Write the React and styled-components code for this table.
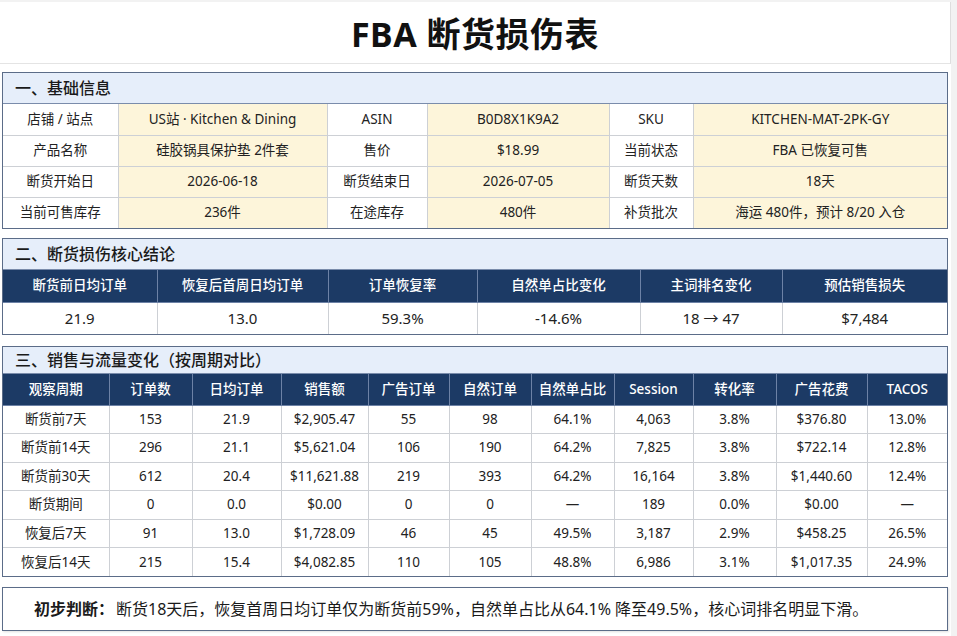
import styled, { createGlobalStyle } from "styled-components";

const GlobalStyle = createGlobalStyle`
  body {
    margin: 0;
    background: #f2f2f2;
    font-family: "Noto Sans", "Noto Sans CJK SC", sans-serif;
    color: #222;
  }
`;

const Sheet = styled.div`
  width: 951px;
  margin-top: 2px;
  background: #fff;
  padding-bottom: 6px;
`;

const TitleBar = styled.header`
  height: 61px;
  display: flex;
  align-items: center;
  justify-content: center;
  border-right: 1px solid #dedede;
  border-bottom: 1px solid #e4e4e4;
  font-size: 34px;
  font-weight: 700;
  color: #111;
  letter-spacing: 0.5px;
`;

const Content = styled.main`
  display: flex;
  flex-direction: column;
  padding: 0 3px 0 2px;
`;

const Section = styled.section`
  margin-top: ${(p) => p.$top}px;
  border: 1px solid #5b6c88;
`;

const Band = styled.div`
  height: ${(p) => p.$h}px;
  box-sizing: border-box;
  display: flex;
  align-items: center;
  padding-left: 12px;
  background: #e6eefa;
  border-bottom: 1px solid #7a8cab;
  font-size: 16px;
  font-weight: 500;
  line-height: 1;
  color: #1a1a1a;
`;

const Table = styled.table`
  width: 100%;
  border-collapse: collapse;
  border-style: hidden;
  table-layout: fixed;
  line-height: 1.1;
`;

const Th = styled.th`
  height: ${(p) => p.$h}px;
  box-sizing: border-box;
  padding: 0;
  background: #1c3a65;
  color: #fff;
  font-size: 13.5px;
  font-weight: 500;
  text-align: center;
  border: 1px solid #6d82a6;
`;

const Td = styled.td`
  height: ${(p) => p.$h}px;
  box-sizing: border-box;
  padding: 0;
  text-align: center;
  font-size: ${(p) => p.$size || 13.5}px;
  background: ${(p) => (p.$fill ? "#fdf5da" : "#fff")};
  border: 1px solid #cdd0d5;
  white-space: nowrap;
`;

const Verdict = styled.div`
  margin-top: 10px;
  height: 44px;
  box-sizing: border-box;
  display: flex;
  align-items: center;
  padding-left: 31px;
  border: 1px solid #5b6c88;
  box-shadow: 1px 1px 2px rgba(0, 0, 0, 0.12);
  font-size: 16px;
  line-height: 1;
  color: #1a1a1a;

  strong {
    font-weight: 700;
    margin-right: 2px;
  }
`;

const basics = [
  ["店铺 / 站点", "US站 · Kitchen & Dining", "ASIN", "B0D8X1K9A2", "SKU", "KITCHEN-MAT-2PK-GY"],
  ["产品名称", "硅胶锅具保护垫 2件套", "售价", "$18.99", "当前状态", "FBA 已恢复可售"],
  ["断货开始日", "2026-06-18", "断货结束日", "2026-07-05", "断货天数", "18天"],
  ["当前可售库存", "236件", "在途库存", "480件", "补货批次", "海运 480件，预计 8/20 入仓"],
];

const summaryHead = ["断货前日均订单", "恢复后首周日均订单", "订单恢复率", "自然单占比变化", "主词排名变化", "预估销售损失"];
const summaryVals = ["21.9", "13.0", "59.3%", "-14.6%", "18 → 47", "$7,484"];

const trendHead = ["观察周期", "订单数", "日均订单", "销售额", "广告订单", "自然订单", "自然单占比", "Session", "转化率", "广告花费", "TACOS"];
const trendRows = [
  ["断货前7天", "153", "21.9", "$2,905.47", "55", "98", "64.1%", "4,063", "3.8%", "$376.80", "13.0%"],
  ["断货前14天", "296", "21.1", "$5,621.04", "106", "190", "64.2%", "7,825", "3.8%", "$722.14", "12.8%"],
  ["断货前30天", "612", "20.4", "$11,621.88", "219", "393", "64.2%", "16,164", "3.8%", "$1,440.60", "12.4%"],
  ["断货期间", "0", "0.0", "$0.00", "0", "0", "—", "189", "0.0%", "$0.00", "—"],
  ["恢复后7天", "91", "13.0", "$1,728.09", "46", "45", "49.5%", "3,187", "2.9%", "$458.25", "26.5%"],
  ["恢复后14天", "215", "15.4", "$4,082.85", "110", "105", "48.8%", "6,986", "3.1%", "$1,017.35", "24.9%"],
];

const basicCols = [115, 209, 100, 182, 84, 254];
const summaryCols = [154, 171, 149, 163, 142, 165];
const trendCols = [106, 83, 89, 87, 81, 82, 83, 79, 83, 91, 80];

function Cols({ widths }) {
  return (
    <colgroup>
      {widths.map((w, i) => (
        <col key={i} style={{ width: w }} />
      ))}
    </colgroup>
  );
}

export default function App() {
  return (
    <>
      <GlobalStyle />
      <Sheet>
        <TitleBar>FBA 断货损伤表</TitleBar>
        <Content>
          <Section $top={8}>
            <Band $h={31}>一、基础信息</Band>
            <Table>
              <Cols widths={basicCols} />
              <tbody>
                {basics.map((row, r) => (
                  <tr key={r}>
                    {row.map((cell, c) => (
                      <Td key={c} $h={31} $fill={c % 2 === 1}>
                        {cell}
                      </Td>
                    ))}
                  </tr>
                ))}
              </tbody>
            </Table>
          </Section>

          <Section $top={9}>
            <Band $h={31}>二、断货损伤核心结论</Band>
            <Table>
              <Cols widths={summaryCols} />
              <thead>
                <tr>
                  {summaryHead.map((h) => (
                    <Th key={h} $h={32}>
                      {h}
                    </Th>
                  ))}
                </tr>
              </thead>
              <tbody>
                <tr>
                  {summaryVals.map((v, i) => (
                    <Td key={i} $h={32} $size={15}>
                      {v}
                    </Td>
                  ))}
                </tr>
              </tbody>
            </Table>
          </Section>

          <Section $top={11}>
            <Band $h={27}>三、销售与流量变化（按周期对比）</Band>
            <Table>
              <Cols widths={trendCols} />
              <thead>
                <tr>
                  {trendHead.map((h) => (
                    <Th key={h} $h={31}>
                      {h}
                    </Th>
                  ))}
                </tr>
              </thead>
              <tbody>
                {trendRows.map((row, r) => (
                  <tr key={r}>
                    {row.map((cell, c) => (
                      <Td key={c} $h={28.5} $size={13.5}>
                        {cell}
                      </Td>
                    ))}
                  </tr>
                ))}
              </tbody>
            </Table>
          </Section>

          <Verdict>
            <strong>初步判断：</strong>
            断货18天后，恢复首周日均订单仅为断货前59%，自然单占比从64.1% 降至49.5%，核心词排名明显下滑。
          </Verdict>
        </Content>
      </Sheet>
    </>
  );
}
